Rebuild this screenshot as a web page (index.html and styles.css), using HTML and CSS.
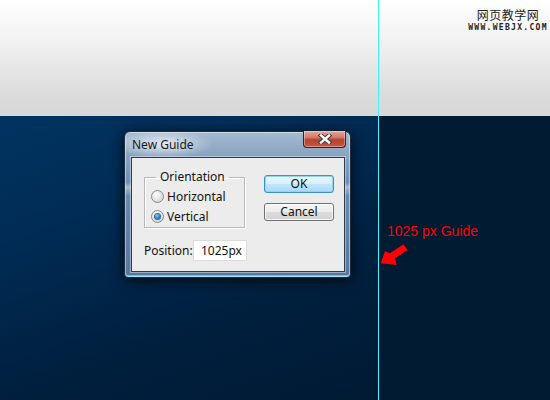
FILE: index.html
```html
<!DOCTYPE html>
<html lang="en">
<head>
    <meta charset="UTF-8">
    <title>New Guide</title>
    <link rel="stylesheet" href="styles.css">
</head>
<body>

    <div class="screen">
        <div class="top-band">
            <div class="watermark">
                <div class="wm-cn">网页教学网</div>
                <div class="wm-url">WWW.WEBJX.COM</div>
            </div>
        </div>

        <div class="canvas-area">
            <div class="canvas-left"></div>
            <div class="canvas-right"></div>
        </div>

        <!-- guide line runs over both bands -->
        <div class="guide"></div>

        <div class="note">1025 px Guide</div>
        <svg class="arrow" width="32" height="24" viewBox="0 0 32 24">
            <polygon points="2.7,20.3 7,8 12,10.3 25.3,1.3 29.7,7 17,15.3 18.7,22" fill="#ff0000"/>
        </svg>

        <div class="dialog">
            <div class="titlebar">
                <span class="title">New Guide</span>
                <div class="close-btn">
                    <svg width="14" height="10" viewBox="0 0 14 10">
                        <path d="M3 1.5 L11 8.5 M11 1.5 L3 8.5" stroke="#3d3d3d" stroke-width="4.4" stroke-linecap="square"/>
                        <path d="M3 1.5 L11 8.5 M11 1.5 L3 8.5" stroke="#ffffff" stroke-width="2.4" stroke-linecap="square"/>
                    </svg>
                </div>
            </div>

            <div class="content">
                <div class="top-row">
                    <fieldset class="group">
                        <legend>Orientation</legend>
                        <label class="radio-row"><span class="radio"></span>Horizontal</label>
                        <label class="radio-row"><span class="radio checked"></span>Vertical</label>
                    </fieldset>
                    <div class="buttons">
                        <div class="btn default">OK</div>
                        <div class="btn">Cancel</div>
                    </div>
                </div>
                <div class="position-row">
                    <span class="pos-label">Position:</span>
                    <div class="pos-input">1025px</div>
                </div>
            </div>
        </div>
    </div>

</body>
</html>
```

FILE: styles.css
```css
body {
    margin: 0;
    font-family: "Noto Sans", Arial, sans-serif;
    font-size: 12px;
}
.screen {
    position: relative;
    width: 550px;
    height: 400px;
    overflow: hidden;
}
.top-band {
    height: 116px;
    background: linear-gradient(180deg, #ffffff 0%, #f0f0f0 40%, #dadada 85%, #d8d8d8 100%);
    display: flex;
    justify-content: flex-end;
}
.watermark {
    width: 84px;
    padding-top: 7px;
    text-align: center;
    color: #222;
}
.wm-cn {
    font-family: "Noto Sans CJK SC", sans-serif;
    font-size: 12px;
    line-height: 15px;
    letter-spacing: 0.5px;
}
.wm-url {
    font-family: "DejaVu Sans Mono", monospace;
    font-weight: bold;
    font-size: 8px;
    line-height: 10px;
    letter-spacing: 1.3px;
    margin-top: 1px;
}
.canvas-area {
    height: 284px;
    display: flex;
}
.canvas-left {
    width: 379px;
    background: linear-gradient(160deg, #003461 0%, #002c55 30%, #00203f 65%, #001a33 100%);
}
.canvas-right {
    flex: 1;
    background: #001b32;
}
.guide {
    position: absolute;
    left: 378px;
    top: 0;
    width: 1px;
    height: 400px;
    background: #3ff2ff;
}
.note {
    position: absolute;
    left: 387px;
    top: 223px;
    font-family: "Liberation Sans", Arial, sans-serif;
    font-size: 14px;
    color: #ff0000;
}
.arrow {
    position: absolute;
    left: 378px;
    top: 243px;
}

/* dialog window */
.dialog {
    position: absolute;
    left: 124px;
    top: 131px;
    width: 227px;
    height: 147px;
    box-sizing: border-box;
    padding: 0 5px 5px 6px;
    border: 1px solid #1c2c3e;
    border-radius: 6px 6px 4px 4px;
    background:
        radial-gradient(ellipse 50px 14px at 38px 12px, rgba(255,255,255,0.75), rgba(255,255,255,0) 100%),
        linear-gradient(180deg, #a6bbd0 0%, #8aa5c2 15%, #6e8fb3 35%, #a7bccf 38%, #6a8bb0 44%, #55779e 100%);
    box-shadow: inset 0 0 0 1px rgba(255,255,255,0.45), inset 0 -2px 0 #5cc8f0, 0 2px 14px rgba(0,0,0,0.75);
    display: flex;
    flex-direction: column;
}
.titlebar {
    height: 25px;
    position: relative;
}
.title {
    position: absolute;
    left: 1px;
    top: 4px;
    color: #1a1a1a;
}
.close-btn {
    position: absolute;
    right: -1px;
    top: -1px;
    width: 43px;
    height: 17px;
    box-sizing: border-box;
    border: 1px solid #4a1a14;
    border-top: none;
    border-radius: 0 0 4px 4px;
    background: linear-gradient(180deg, #e7a89b 0%, #d27a68 40%, #b6412d 55%, #c25a43 100%);
    box-shadow: inset 0 0 0 1px rgba(255,255,255,0.35);
    display: flex;
    align-items: center;
    justify-content: center;
}
.content {
    flex: 1;
    background: #ececec;
    border: 1px solid #2e3b48;
    box-shadow: 0 0 0 1px rgba(255,255,255,0.4);
    padding: 12px 0 0 12px;
    color: #111;
}
.top-row {
    display: flex;
    align-items: flex-start;
}
.group {
    margin: 0;
    width: 101px;
    box-sizing: border-box;
    padding: 2px 0 1px 6px;
    border: 1px solid #b9b9b9;
    box-shadow: inset 1px 1px 0 #fff, 1px 1px 0 #fff;
}
.group legend {
    margin-left: 5px;
    padding: 0 4px;
    line-height: 14px;
}
.radio-row {
    display: flex;
    align-items: center;
    gap: 3px;
    height: 20px;
}
.radio {
    width: 11px;
    height: 11px;
    border-radius: 50%;
    border: 1px solid #8a8a8a;
    background: radial-gradient(circle at 40% 35%, #ffffff 0%, #e6e6e6 45%, #c8c8c8 100%);
    display: flex;
    align-items: center;
    justify-content: center;
}
.radio.checked::after {
    content: "";
    width: 5px;
    height: 5px;
    border-radius: 50%;
    background: radial-gradient(circle at 40% 35%, #8fd6ff 0%, #1d7fc4 55%, #0b4f86 100%);
    box-shadow: 0 0 0 1px #2a6c9c;
}
.buttons {
    margin: 5px 0 0 19px;
    display: flex;
    flex-direction: column;
    gap: 10px;
}
.btn {
    width: 70px;
    height: 18px;
    box-sizing: border-box;
    border: 1px solid #707070;
    border-radius: 3px;
    background: linear-gradient(180deg, #f6f6f6 0%, #ececec 48%, #dcdcdc 52%, #d2d2d2 100%);
    box-shadow: inset 0 0 0 1px rgba(255,255,255,0.8);
    text-align: center;
    line-height: 16px;
}
.btn.default {
    border-color: #3c93c9;
    box-shadow: inset 0 0 0 1px #8fd3f5;
    background: linear-gradient(180deg, #eaf6fd 0%, #d9effc 48%, #bee6fd 52%, #a7d9f5 100%);
}
.position-row {
    display: flex;
    align-items: center;
    margin-top: 12px;
}
.pos-label {
    width: 49px;
}
.pos-input {
    width: 54px;
    height: 21px;
    box-sizing: border-box;
    border: 1px solid #dcdcdc;
    background: #fff;
    padding-left: 7px;
    line-height: 19px;
}
```
